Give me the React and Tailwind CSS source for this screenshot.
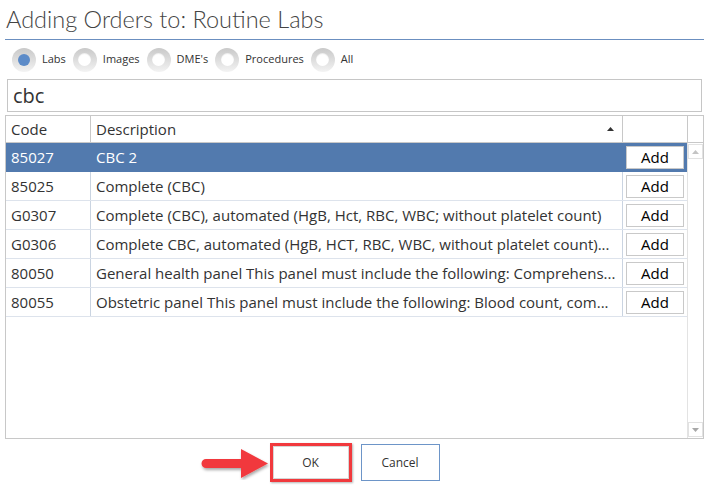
import React from "react";

const rows = [
  { code: "85027", desc: "CBC 2", sel: true },
  { code: "85025", desc: "Complete (CBC)" },
  { code: "G0307", desc: "Complete (CBC), automated (HgB, Hct, RBC, WBC; without platelet count)" },
  { code: "G0306", desc: "Complete CBC, automated (HgB, HCT, RBC, WBC, without platelet count)..." },
  { code: "80050", desc: "General health panel This panel must include the following: Comprehens..." },
  { code: "80055", desc: "Obstetric panel This panel must include the following: Blood count, com..." },
];

const radios = [
  { label: "Labs", sel: true },
  { label: "Images" },
  { label: "DME's" },
  { label: "Procedures" },
  { label: "All" },
];

function Radio({ label, sel }) {
  return (
    <div className="flex items-center gap-[6px]">
      <div className="w-[24px] h-[24px] rounded-full bg-gradient-to-b from-[#c9c9c9] to-[#f3f3f3] flex items-center justify-center">
        <div
          className={
            sel
              ? "w-[12px] h-[12px] rounded-full bg-[#5c8bc8]"
              : "w-[13px] h-[13px] rounded-full bg-white shadow-[inset_0_1px_1px_rgba(0,0,0,0.08)]"
          }
        />
      </div>
      <span className="text-[11px] text-[#333]">{label}</span>
    </div>
  );
}

export default function App() {
  return (
    <div className="w-[709px] h-[489px] bg-white font-['Open_Sans',sans-serif] flex flex-col overflow-hidden">
      <div className="mx-[5px] h-[40px] border-b border-[#6b8fc0] flex items-end">
        <h1 className="font-['Lato',sans-serif] text-[23.5px] font-light text-[#444] leading-none pb-[8px] pl-[1px]">
          Adding Orders to: Routine Labs
        </h1>
      </div>
      <div className="h-[39px] flex items-center pl-[12px] gap-[7px]">
        {radios.map((r) => (
          <Radio key={r.label} {...r} />
        ))}
      </div>
      <div className="mx-[7px] h-[33px] border border-[#c6c6c6] flex items-center pl-[5px]">
        <span className="text-[20px] text-[#333] leading-none">cbc</span>
      </div>
      <div className="mx-[5px] mt-[3px] h-[324px] border border-[#c8c8c8] flex flex-col text-[15px] text-[#333]">
        <div className="h-[27px] flex border-b border-[#c8c8c8] shrink-0">
          <div className="w-[85px] border-r border-[#c8c8c8] flex items-center pl-[5px]">Code</div>
          <div className="w-[532px] border-r border-[#c8c8c8] flex items-center pl-[5px] justify-between pr-[8px]">
            <span>Description</span>
            <svg width="7" height="4" viewBox="0 0 7 4"><path d="M0 4 L3.5 0 L7 4 Z" fill="#333" /></svg>
          </div>
          <div className="w-[65px] border-r border-[#c8c8c8]" />
          <div className="flex-1" />
        </div>
        <div className="flex-1 flex">
          <div className="w-[682px] flex flex-col">
            {rows.map((r) => (
              <div
                key={r.code}
                className={
                  "h-[29px] flex border-b " +
                  (r.sel ? "bg-[#527aae] text-white border-[#527aae]" : "border-[#dde3ec]")
                }
              >
                <div className={"w-[85px] shrink-0 border-r flex items-center pl-[5px] " + (r.sel ? "border-[#527aae]" : "border-[#cad4e1]")}>
                  {r.code}
                </div>
                <div className={"w-[532px] shrink-0 border-r flex items-center pl-[5px] whitespace-nowrap " + (r.sel ? "border-[#527aae]" : "border-[#cad4e1]")}>
                  {r.desc}
                </div>
                <div className="flex-1 flex items-center pl-[3px]">
                  <div className="w-[58px] h-[23px] bg-white border border-[#c9c9c9] flex items-center justify-center text-black text-[15px]">
                    Add
                  </div>
                </div>
              </div>
            ))}
          </div>
          <div className="flex-1 flex flex-col justify-between items-center border-l border-[#e3e3e3] py-[1px]">
            <div className="w-[15px] h-[15px] border border-[#e2e2e2] flex items-center justify-center">
              <svg width="7" height="4" viewBox="0 0 7 4"><path d="M0 4 L3.5 0 L7 4 Z" fill="#c4c4c4" /></svg>
            </div>
            <div className="w-[15px] h-[15px] border border-[#e2e2e2] flex items-center justify-center">
              <svg width="7" height="4" viewBox="0 0 7 4"><path d="M0 0 L7 0 L3.5 4 Z" fill="#a8a8a8" /></svg>
            </div>
          </div>
        </div>
      </div>
      <div className="flex justify-center items-center gap-[9px] mt-[4px]">
        <div className="relative">
          <svg className="absolute left-[-72px] top-[5px]" width="74" height="32" viewBox="0 0 74 32">
            <defs>
              <filter id="sh" x="-20%" y="-30%" width="140%" height="170%">
                <feDropShadow dx="1" dy="2" stdDeviation="1.5" floodColor="#000" floodOpacity="0.35" />
              </filter>
            </defs>
            <g filter="url(#sh)">
              <path d="M8 11 H43 V1 L70 15.5 L43 30 V20 H8 A4.5 4.5 0 0 1 8 11 Z" fill="#f1393d" />
            </g>
          </svg>
          <div className="w-[82px] h-[39px] border-[3px] border-[#f1393d] shadow-[1px_1px_2px_rgba(0,0,0,0.3)] flex items-center justify-center">
            <div className="w-full h-full border border-[#d6d6d6] flex items-center justify-center text-[12px] text-[#333]">OK</div>
          </div>
        </div>
        <div className="w-[79px] h-[37px] border border-[#6d95c8] flex items-center justify-center text-[12px] text-[#333]">
          Cancel
        </div>
      </div>
    </div>
  );
}
